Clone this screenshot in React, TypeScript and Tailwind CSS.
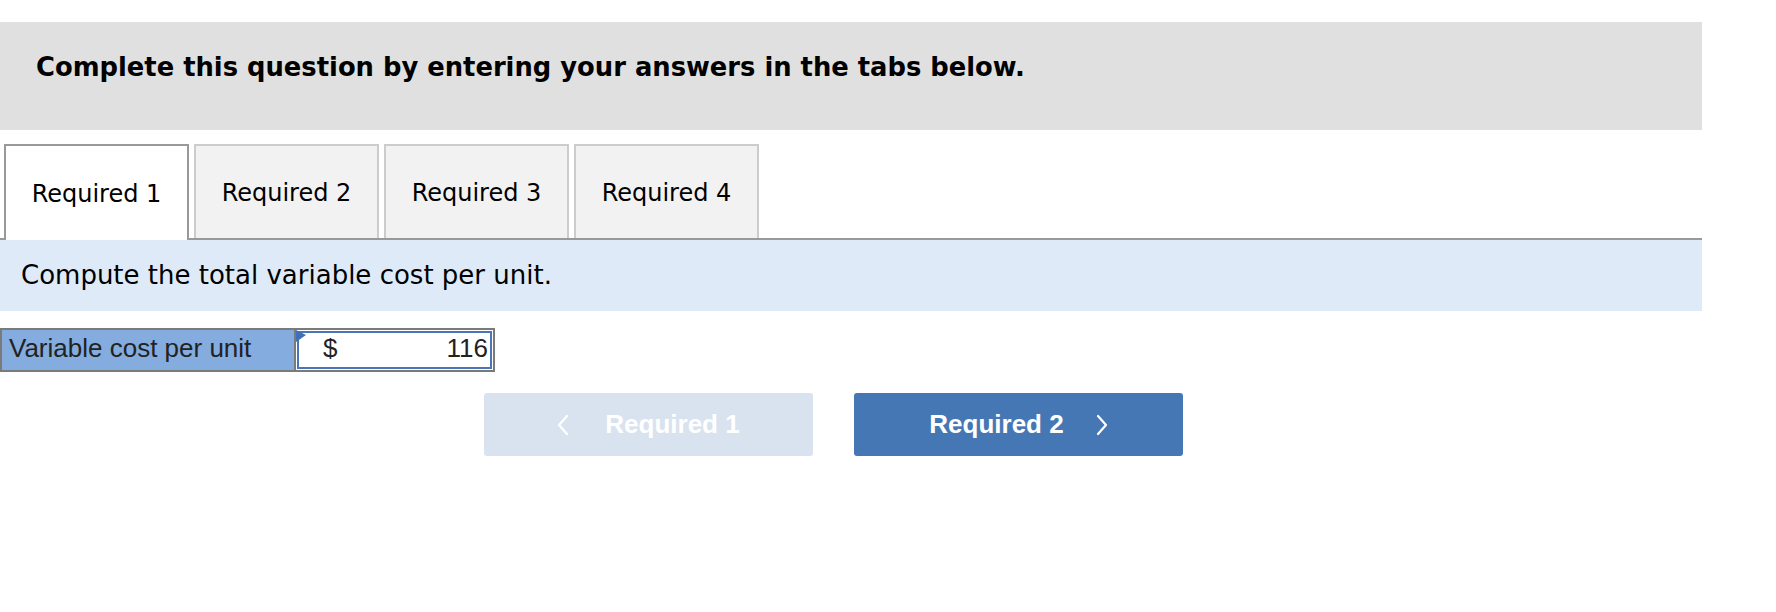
import React from "react";

const verdana = { fontFamily: '"DejaVu Sans", Verdana, sans-serif' };

const Chevron: React.FC<{ dir: "left" | "right" }> = ({ dir }) => (
  <svg width="12" height="22" viewBox="0 0 12 22" fill="none">
    <path
      d={dir === "left" ? "M10 2 L2 11 L10 20" : "M2 2 L10 11 L2 20"}
      stroke="white"
      strokeWidth="2.2"
      strokeLinecap="round"
      strokeLinejoin="round"
    />
  </svg>
);

const App: React.FC = () => {
  const tabs = ["Required 1", "Required 2", "Required 3", "Required 4"];

  return (
    <div className="w-full h-[612px] bg-white">
      <div className="w-[1702px] pt-[22px]">
        <div className="h-[108px] bg-[#e0e0e0] pt-[30px] pl-[36px]">
          <h2 className="text-[25.8px] leading-[30px] font-bold text-black" style={verdana}>
            Complete this question by entering your answers in the tabs below.
          </h2>
        </div>

        <div className="mt-[14px] flex gap-[5px] pl-[4px] border-b-2 border-[#999]">
          {tabs.map((t, i) =>
            i === 0 ? (
              <div
                key={t}
                className="-mb-[2px] w-[185px] h-[96px] bg-white border-2 border-b-0 border-[#999] flex items-center justify-center pt-[2px] text-[24px] text-black"
                style={verdana}
              >
                {t}
              </div>
            ) : (
              <div
                key={t}
                className="w-[185px] h-[94px] bg-[#f2f2f2] border-2 border-b-0 border-[#ccc] flex items-center justify-center pt-[2px] text-[24px] text-black"
                style={verdana}
              >
                {t}
              </div>
            )
          )}
        </div>

        <div className="h-[71px] bg-[#deeaf7] flex items-center pl-[21px]">
          <p className="text-[26px] text-black" style={verdana}>
            Compute the total variable cost per unit.
          </p>
        </div>

        <div
          className="mt-[17px] flex h-[44px] w-[495px] text-[26px] text-[#222]"
          style={{ fontFamily: '"Liberation Sans", Arial, sans-serif' }}
        >
          <div className="w-[296px] bg-[#84acdf] border-2 border-[#7a7a7a] flex items-center pl-[7px] pb-[3px]">
            Variable cost per unit
          </div>
          <div className="relative flex-1 border-2 border-l-0 border-[#7a7a7a] p-[1px]">
            <div className="h-full border-2 border-[#4a76b8] bg-white flex items-center justify-between pl-[24px] pr-[2px] pb-[3px]">
              <span>$</span>
              <span>116</span>
            </div>
            <svg className="absolute left-0 top-0" width="10" height="12" viewBox="0 0 10 12">
              <path d="M0 0 L10 5 L0 12 Z" fill="#3f71b6" />
            </svg>
          </div>
        </div>

        <div
          className="mt-[21px] flex gap-[41px] pl-[484px] text-[26px] font-bold text-white"
          style={{ fontFamily: '"Liberation Sans", Arial, sans-serif' }}
        >
          <button className="w-[329px] h-[63px] rounded-[3px] bg-[#d9e3ef] flex items-center justify-center gap-[36px]">
            <Chevron dir="left" />
            <span>Required 1</span>
          </button>
          <button className="w-[329px] h-[63px] rounded-[3px] bg-[#4677b5] flex items-center justify-center gap-[32px]">
            <span>Required 2</span>
            <Chevron dir="right" />
          </button>
        </div>
      </div>
    </div>
  );
};

export default App;
